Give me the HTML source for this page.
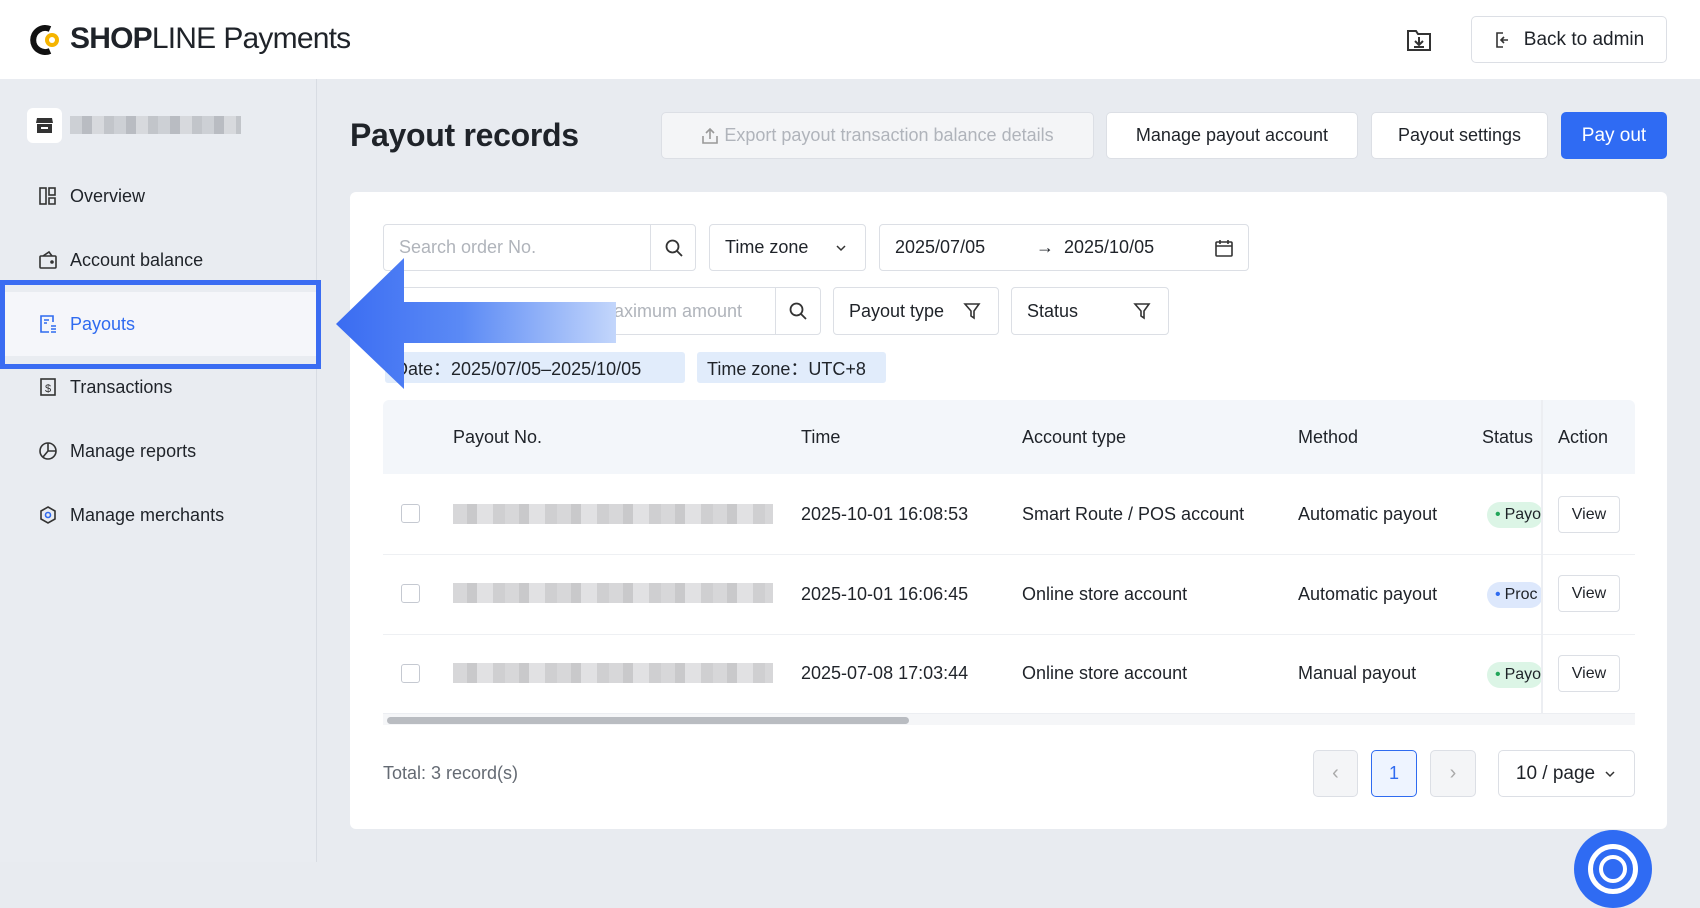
<!DOCTYPE html>
<html><head><meta charset="utf-8"><style>
*{box-sizing:border-box;margin:0;padding:0}
body{width:1700px;height:862px;overflow:hidden;background:#e8ebf0;font-family:"Liberation Sans",Arial,sans-serif;color:#1f2329;position:relative}
.abs{position:absolute}
.hdr{left:0;top:0;width:1700px;height:79px;background:#fff}
.btn{position:absolute;background:#fff;border:1px solid #dcdfe5;border-radius:5px;display:flex;align-items:center;justify-content:center;font-size:18px;color:#1f2329}
.side{left:0;top:79px;width:317px;height:783px;background:#e9ecf1;border-right:1px solid #d8dce3}
.nav{position:absolute;left:0;width:317px;height:40px;display:flex;align-items:center;font-size:18px;color:#1f2329}
.nav svg{position:absolute;left:38px}
.nav span{position:absolute;left:70px}
.card{left:350px;top:192px;width:1317px;height:637px;background:#fff;border-radius:6px}
.inp{position:absolute;border:1px solid #dcdfe5;border-radius:4px;background:#fff;font-size:18px;display:flex;align-items:center}
.tag{position:absolute;height:31px;background:#e1ecfb;border-radius:3px;font-size:18px;display:flex;align-items:center;padding:0 10px;color:#1f2329}
.th{position:absolute;font-size:18px;color:#1f2329;top:427px}
.cell{position:absolute;font-size:18px;color:#1f2329}
.cb{position:absolute;left:401px;width:19px;height:19px;border:1.5px solid #c5c9d1;border-radius:3px;background:#fff}
.blur{position:absolute;left:453px;width:320px;height:20px;background:repeating-linear-gradient(90deg,#d7d7d9 0 14px,#c9c9cb 14px 24px,#e1e1e3 24px 40px,#cfcfd1 40px 52px)}
.pill{position:absolute;left:1487px;width:56px;height:26px;border-radius:13px;font-size:16px;display:flex;align-items:center;padding-left:8px;overflow:hidden;white-space:nowrap}
.view{position:absolute;left:1558px;width:62px;height:37px;border:1px solid #dcdfe5;border-radius:4px;background:#fff;font-size:16px;display:flex;align-items:center;justify-content:center}
</style></head><body>
<div class="abs hdr">
  <svg class="abs" style="left:30px;top:24px" width="34" height="32" viewBox="0 0 34 32"><path d="M20 5 A12 12 0 1 0 20 27" fill="none" stroke="#111" stroke-width="6"/><circle cx="22" cy="16" r="7" fill="#f5b400"/><circle cx="22" cy="16" r="3" fill="#fff"/></svg>
  <div class="abs" style="left:70px;top:22px;font-size:30px;letter-spacing:-0.8px;white-space:nowrap"><b style="font-weight:900">SHOP</b><span style="font-weight:300">LINE</span><span style="font-weight:400;margin-left:8px">Payments</span></div>
  <svg class="abs" style="left:1406px;top:28px" width="26" height="25" viewBox="0 0 26 25" fill="none" stroke="#333" stroke-width="2"><path d="M2 3h8l2 3h12v16H2z"/><path d="M13 9v8M9 13l4 4 4-4M8 19h10"/></svg>
  <div class="btn" style="left:1471px;top:16px;width:196px;height:47px;font-size:19px"><svg width="18" height="18" viewBox="0 0 18 18" fill="none" stroke="#333" stroke-width="1.6" style="margin-right:12px"><path d="M9 2H3v14h6M14 9H7M10 6l-3 3 3 3"/></svg>Back to admin</div>
</div>
<div class="abs side">
  <div class="abs" style="left:27px;top:29px;width:35px;height:35px;background:#fff;border-radius:6px"><svg style="margin:8px" width="19" height="19" viewBox="0 0 19 19"><path d="M2 2h15l1 5H1z M2 8h15v9H2z" fill="#333"/><rect x="6" y="11" width="7" height="2" fill="#fff"/></svg></div>
  <div class="abs" style="left:70px;top:37px;width:171px;height:18px;background:repeating-linear-gradient(90deg,#cdd0d5 0 12px,#b9bcc2 12px 22px,#d7d9dd 22px 34px,#c2c5ca 34px 44px)"></div>
</div>
<div class="nav" style="top:176px"><svg width="20" height="20" viewBox="0 0 20 20" fill="none" stroke="#333" stroke-width="1.6"><rect x="2" y="2" width="6" height="16"/><rect x="11" y="2" width="6" height="7"/><path d="M11 12h6v6h-6z"/></svg><span>Overview</span></div>
<div class="nav" style="top:240px"><svg width="20" height="20" viewBox="0 0 20 20" fill="none" stroke="#333" stroke-width="1.6"><rect x="2" y="6" width="16" height="12" rx="1"/><path d="M5 6l6-4 3 4"/><circle cx="14" cy="12" r="1" fill="#333"/></svg><span>Account balance</span></div>
<div class="abs" style="left:0;top:292px;width:317px;height:64px;background:#f5f6fa"></div>
<div class="nav" style="top:304px;color:#2f6bf0"><svg width="20" height="20" viewBox="0 0 20 20" fill="none" stroke="#2f6bf0" stroke-width="1.6"><path d="M15 8V2H3v16h8"/><path d="M6 6h5M6 9h3M13 12h5M13 15h5M13 18h5"/></svg><span>Payouts</span></div>
<div class="abs" style="left:0;top:280px;width:321px;height:89px;border:5px solid #3a6cf2"></div>
<div class="nav" style="top:367px"><svg width="20" height="20" viewBox="0 0 20 20" fill="none" stroke="#333" stroke-width="1.6"><rect x="3" y="2" width="14" height="16"/><text x="10" y="15" font-size="11" text-anchor="middle" fill="#333" stroke="none" font-family="Liberation Sans">$</text></svg><span>Transactions</span></div>
<div class="nav" style="top:431px"><svg width="20" height="20" viewBox="0 0 20 20" fill="none" stroke="#333" stroke-width="1.6"><circle cx="10" cy="10" r="8"/><path d="M10 2v8h8M10 10l-5 6"/></svg><span>Manage reports</span></div>
<div class="nav" style="top:495px"><svg width="20" height="20" viewBox="0 0 20 20" fill="none" stroke="#333" stroke-width="1.6"><path d="M10 2l7 4v8l-7 4-7-4V6z"/><circle cx="10" cy="10" r="2.5" stroke="#2f6bf0"/></svg><span>Manage merchants</span></div>

<div class="abs" style="left:350px;top:117px;font-size:32px;font-weight:700;letter-spacing:-0.3px">Payout records</div>
<div class="btn" style="left:661px;top:112px;width:433px;height:47px;background:#f4f5f7;color:#b0b4bb"><svg width="18" height="18" viewBox="0 0 18 18" fill="none" stroke="#999" stroke-width="1.6" style="margin-right:5px"><path d="M9 12V2M5 6l4-4 4 4M2 9v7h14V9"/></svg>Export payout transaction balance details</div>
<div class="btn" style="left:1106px;top:112px;width:252px;height:47px">Manage payout account</div>
<div class="btn" style="left:1371px;top:112px;width:177px;height:47px">Payout settings</div>
<div class="btn" style="left:1561px;top:112px;width:106px;height:47px;background:#2f6bf3;border-color:#2f6bf3;color:#fff;font-size:19px">Pay out</div>

<div class="abs card"></div>
<div class="inp" style="left:383px;top:224px;width:313px;height:47px;color:#b0b4bb;padding-left:15px">Search order No.<div style="position:absolute;left:266px;top:0;width:1px;height:45px;background:#dcdfe5"></div><svg style="position:absolute;left:280px" width="20" height="20" viewBox="0 0 20 20" fill="none" stroke="#333" stroke-width="1.8"><circle cx="8.5" cy="8.5" r="6"/><path d="M13 13l5 5"/></svg></div>
<div class="inp" style="left:709px;top:224px;width:157px;height:47px;padding-left:15px">Time zone<svg style="position:absolute;left:124px" width="14" height="14" viewBox="0 0 14 14" fill="none" stroke="#333" stroke-width="1.5"><path d="M3 5l4 4 4-4"/></svg></div>
<div class="inp" style="left:879px;top:224px;width:370px;height:47px;padding-left:15px">2025/07/05<span style="position:absolute;left:156px">→</span><span style="position:absolute;left:184px">2025/10/05</span><svg style="position:absolute;left:334px" width="20" height="20" viewBox="0 0 20 20" fill="none" stroke="#333" stroke-width="1.6"><rect x="2" y="4" width="16" height="14" rx="1"/><path d="M2 8h16M6 2v4M14 2v4"/></svg></div>
<div class="inp" style="left:383px;top:287px;width:438px;height:48px;color:#b0b4bb;padding-left:230px">aximum amount<div style="position:absolute;left:391px;top:0;width:1px;height:46px;background:#dcdfe5"></div><svg style="position:absolute;left:404px" width="20" height="20" viewBox="0 0 20 20" fill="none" stroke="#333" stroke-width="1.8"><circle cx="8.5" cy="8.5" r="6"/><path d="M13 13l5 5"/></svg></div>
<div class="inp" style="left:833px;top:287px;width:166px;height:48px;padding-left:15px">Payout type<svg style="position:absolute;left:129px" width="18" height="18" viewBox="0 0 18 18" fill="none" stroke="#333" stroke-width="1.6"><path d="M2 2h14l-5 7v7l-3-2V9z"/></svg></div>
<div class="inp" style="left:1011px;top:287px;width:158px;height:48px;padding-left:15px">Status<svg style="position:absolute;left:121px" width="18" height="18" viewBox="0 0 18 18" fill="none" stroke="#333" stroke-width="1.6"><path d="M2 2h14l-5 7v7l-3-2V9z"/></svg></div>
<div class="tag" style="left:385px;top:352px;width:300px">Date：2025/07/05–2025/10/05</div>
<div class="tag" style="left:697px;top:352px;width:189px">Time zone：UTC+8</div>

<div class="abs" style="left:383px;top:400px;width:1252px;height:74px;background:#f3f6fa;border-radius:6px 6px 0 0"></div>
<div class="th" style="left:453px">Payout No.</div>
<div class="th" style="left:801px">Time</div>
<div class="th" style="left:1022px">Account type</div>
<div class="th" style="left:1298px">Method</div>
<div class="th" style="left:1482px">Status</div>
<div class="abs" style="left:1541px;top:400px;width:94px;height:313px;border-left:2px solid #eceef2"></div>
<div class="th" style="left:1558px">Action</div>
<div class="abs" style="left:383px;top:554px;width:1252px;height:1px;background:#eef0f3"></div>
<div class="abs" style="left:383px;top:634px;width:1252px;height:1px;background:#eef0f3"></div>
<div class="abs" style="left:383px;top:713px;width:1252px;height:12px;background:#f5f6f8;border-top:1px solid #eceef2"></div>
<div class="abs" style="left:387px;top:717px;width:522px;height:7px;background:#b9bcc1;border-radius:4px"></div>

<div class="cb" style="top:504px"></div><div class="blur" style="top:504px"></div>
<div class="cell" style="left:801px;top:504px">2025-10-01 16:08:53</div>
<div class="cell" style="left:1022px;top:504px">Smart Route / POS account</div>
<div class="cell" style="left:1298px;top:504px">Automatic payout</div>
<div class="pill" style="top:502px;background:#dcf5e6;color:#1f2329"><span style="color:#22a65a;margin-right:4px">•</span>Payo</div>
<div class="view" style="top:496px">View</div>

<div class="cb" style="top:584px"></div><div class="blur" style="top:583px"></div>
<div class="cell" style="left:801px;top:584px">2025-10-01 16:06:45</div>
<div class="cell" style="left:1022px;top:584px">Online store account</div>
<div class="cell" style="left:1298px;top:584px">Automatic payout</div>
<div class="pill" style="top:582px;background:#dde8fc;color:#1f2329"><span style="color:#2f6bf0;margin-right:4px">•</span>Proc</div>
<div class="view" style="top:575px">View</div>

<div class="cb" style="top:664px"></div><div class="blur" style="top:663px"></div>
<div class="cell" style="left:801px;top:663px">2025-07-08 17:03:44</div>
<div class="cell" style="left:1022px;top:663px">Online store account</div>
<div class="cell" style="left:1298px;top:663px">Manual payout</div>
<div class="pill" style="top:662px;background:#dcf5e6;color:#1f2329"><span style="color:#22a65a;margin-right:4px">•</span>Payo</div>
<div class="view" style="top:655px">View</div>
<div class="abs" style="left:1541px;top:474px;width:2px;height:239px;background:#eceef2"></div>

<div class="cell" style="left:383px;top:763px;color:#646a73">Total: 3 record(s)</div>
<div class="btn" style="left:1313px;top:750px;width:45px;height:47px;background:#f4f5f7;color:#aaa;font-size:20px">‹</div>
<div class="btn" style="left:1371px;top:750px;width:46px;height:47px;background:#eef4ff;border-color:#2f6bf0;color:#2f6bf0">1</div>
<div class="btn" style="left:1430px;top:750px;width:46px;height:47px;background:#f4f5f7;color:#aaa;font-size:20px">›</div>
<div class="btn" style="left:1498px;top:750px;width:137px;height:47px;font-size:19px">10 / page<svg width="14" height="14" viewBox="0 0 14 14" fill="none" stroke="#333" stroke-width="1.5" style="margin-left:8px"><path d="M3 5l4 4 4-4"/></svg></div>

<div class="abs" style="left:1574px;top:830px;width:78px;height:78px;border-radius:50%;background:#2f6bf3"><div style="position:absolute;left:14px;top:14px;width:50px;height:50px;border-radius:50%;border:5px solid #fff"></div><div style="position:absolute;left:25px;top:25px;width:28px;height:28px;border-radius:50%;border:4px solid #fff"></div></div>

<svg class="abs" style="left:334px;top:256px" width="290" height="136" viewBox="0 0 290 136">
<defs><linearGradient id="g" x1="0" x2="1"><stop offset="0" stop-color="#3a6cf2"/><stop offset="0.45" stop-color="#5b8af5"/><stop offset="1" stop-color="#c3d6fb"/></linearGradient></defs>
<path d="M2 68 L70 2 L70 46 L282 46 L282 87 L70 87 L70 133 Z" fill="url(#g)"/>
</svg>
</body></html>
